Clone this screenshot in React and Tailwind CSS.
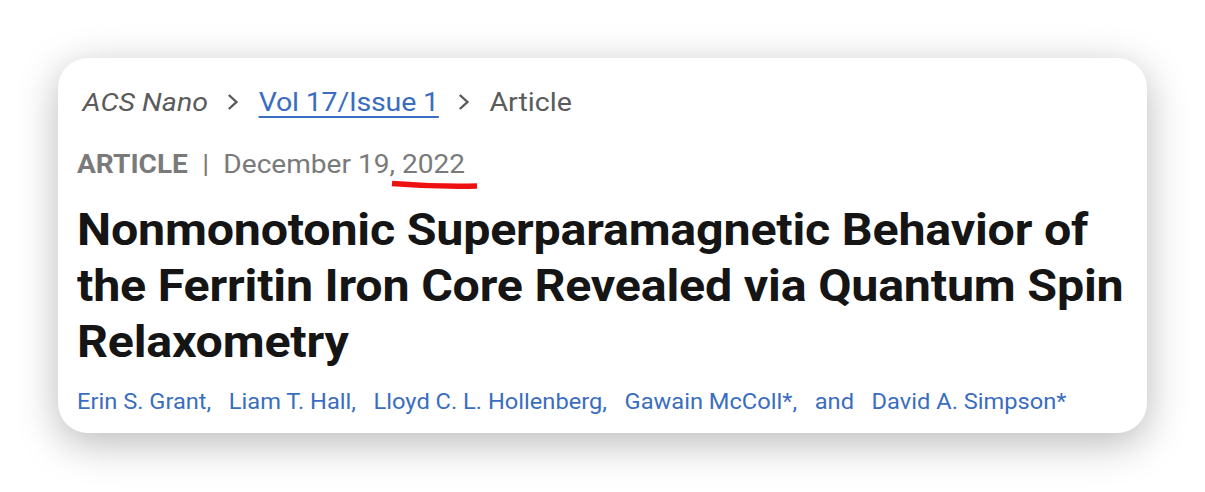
function Chevron() {
  return (
    <svg className="mx-[17px] shrink-0" width="12" height="18" viewBox="0 0 12 18">
      <polyline points="2,2 9,9 2,16" fill="none" stroke="#5b5b5b" strokeWidth="2.2" />
    </svg>
  );
}

export default function App() {
  const authors = ["Erin S. Grant,", "Liam T. Hall,", "Lloyd C. L. Hollenberg,", "Gawain McColl*,", "and", "David A. Simpson*"];

  return (
    <div className="w-[1205px] h-[492px] bg-white pt-[58px] pl-[58px] font-['Roboto',sans-serif]">
      <div className="relative w-[1089px] h-[375px] bg-white rounded-[30px] shadow-[0_10px_40px_rgba(0,0,0,0.28)] pl-[19px] pt-[26px]">
        <div className="scale-x-[1.1] origin-top-left">
          {/* breadcrumb */}
          <div className="flex items-center h-[36px] text-[26px] text-[#5b5b5b]">
            <span className="italic pl-[5px]">ACS Nano</span>
            <Chevron />
            <span className="text-[#3a6dc0] underline underline-offset-[5px] decoration-[2px] tracking-[-0.2px]">Vol 17/Issue 1</span>
            <Chevron />
            <span>Article</span>
          </div>

          {/* type + date */}
          <div className="flex items-center h-[36px] mt-[26px] text-[25.5px] text-[#7a7a7a]">
            <span className="font-bold">ARTICLE</span>
            <span className="mx-[13px]">|</span>
            <span>December 19, 2022</span>
          </div>

          <h1 className="mt-[20px] text-[44px] leading-[56px] font-bold text-[#151515] tracking-[-0.2px]">
            Nonmonotonic Superparamagnetic Behavior of
            <br />
            the Ferritin Iron Core Revealed via Quantum Spin
            <br />
            Relaxometry
          </h1>

          <div className="flex mt-[18px] text-[21.5px] leading-[28px] text-[#3a6dc0] gap-[16px]">
            {authors.map((a) => (
              <span key={a}>{a}</span>
            ))}
          </div>
        </div>

        {/* red pen mark under the year */}
        <svg className="absolute left-[332px] top-[121px]" width="94" height="14" viewBox="0 0 94 14">
          <path d="M2 4.5 Q 45 8 87 7" stroke="#ee1111" strokeWidth="5.5" fill="none" />
        </svg>
      </div>
    </div>
  );
}
